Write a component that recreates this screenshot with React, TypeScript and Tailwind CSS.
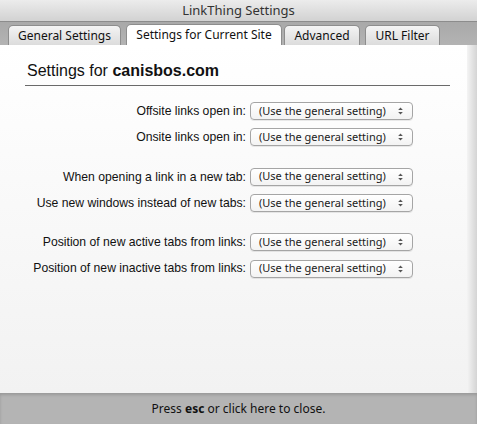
import { useState } from 'react';

const ui = { fontFamily: '"Noto Sans", "DejaVu Sans", sans-serif' };
const helv = { fontFamily: '"Liberation Sans", Arial, sans-serif' };

const TABS = [
  { label: 'General Settings', cls: 'w-[113px] ml-[8px]' },
  { label: 'Settings for Current Site', cls: 'w-[156px] ml-[5px]' },
  { label: 'Advanced', cls: 'w-[76px] ml-[2px]' },
  { label: 'URL Filter', cls: 'w-[75px] ml-[5px]' },
];

const GROUPS = [
  ['Offsite links open in:', 'Onsite links open in:'],
  ['When opening a link in a new tab:', 'Use new windows instead of new tabs:'],
  ['Position of new active tabs from links:', 'Position of new inactive tabs from links:'],
];

function Arrows() {
  return (
    <svg width="7" height="10" viewBox="0 0 7 10" className="shrink-0">
      <path d="M3.5 1.5 L5.8 4 L1.2 4 Z" fill="#555" />
      <path d="M3.5 8.5 L5.8 6 L1.2 6 Z" fill="#555" />
    </svg>
  );
}

function SelectBox() {
  return (
    <div
      className="w-[163px] h-[18px] shrink-0 flex items-center justify-between pl-[8px] pr-[8px] rounded-[4px] border border-[#a5a5a5] bg-gradient-to-b from-white to-[#f3f3f3] shadow-[0_1px_0_rgba(0,0,0,0.08)] text-[11px] text-[#1a1a1a] whitespace-nowrap"
      style={ui}
    >
      <span>(Use the general setting)</span>
      <Arrows />
    </div>
  );
}

export default function App() {
  const [active, setActive] = useState(1);

  return (
    <div className="w-[477px] h-[424px] flex flex-col overflow-hidden bg-[#b4b4b4]">
      {/* title bar */}
      <div
        className="h-[22px] shrink-0 flex items-center justify-center bg-gradient-to-b from-[#ececec] to-[#d2d2d2] border-b border-[#8c8c8c] text-[13px] text-[#333]"
        style={ui}
      >
        LinkThing Settings
      </div>

      {/* tab strip */}
      <div className="h-[23px] shrink-0 flex items-end bg-gradient-to-b from-[#a9a9a9] to-[#b3b3b3]">
        {TABS.map((t, i) => (
          <button
            key={t.label}
            onClick={() => setActive(i)}
            className={`${t.cls} ${
              i === active
                ? 'h-[21px] bg-white'
                : 'h-[20px] bg-gradient-to-b from-[#f4f4f4] to-[#dcdcdc]'
            } shrink-0 rounded-t-[5px] border border-b-0 border-[#8d8d8d] text-[12px] text-[#111] whitespace-nowrap`}
            style={ui}
          >
            {t.label}
          </button>
        ))}
      </div>

      {/* content panel */}
      <div className="flex-1 flex bg-gradient-to-b from-white to-[#f2f2f2]">
        <div className="flex-1 pl-[25px] pr-[17px] pt-[15px]">
          <div
            className="pb-[3px] pl-[2px] border-b border-[#6a6a6a] text-[16px] text-[#111] leading-[22px]"
            style={helv}
          >
            Settings for <b>canisbos.com</b>
          </div>

          <div className="flex flex-col gap-[21px] pt-[16px]">
            {GROUPS.map((g, gi) => (
              <div key={gi} className="flex flex-col gap-[8px]">
                {g.map((label) => (
                  <div key={label} className="flex items-center">
                    <div
                      className="w-[225px] shrink-0 pr-[4px] flex justify-end whitespace-nowrap text-[12.2px] text-[#111]"
                      style={helv}
                    >
                      {label}
                    </div>
                    <SelectBox />
                  </div>
                ))}
              </div>
            ))}
          </div>
        </div>
        <div className="w-[10px] bg-gradient-to-r from-[#f4f4f4] to-[#d4d4d4]" />
      </div>

      {/* close bar */}
      <div
        className="h-[31px] shrink-0 flex items-center justify-center bg-[#b4b4b4] shadow-[inset_0_2px_3px_rgba(0,0,0,0.15)] text-[12px] text-[#111]"
        style={ui}
      >
        <span>
          Press <b>esc</b> or click here to close.
        </span>
      </div>
    </div>
  );
}
